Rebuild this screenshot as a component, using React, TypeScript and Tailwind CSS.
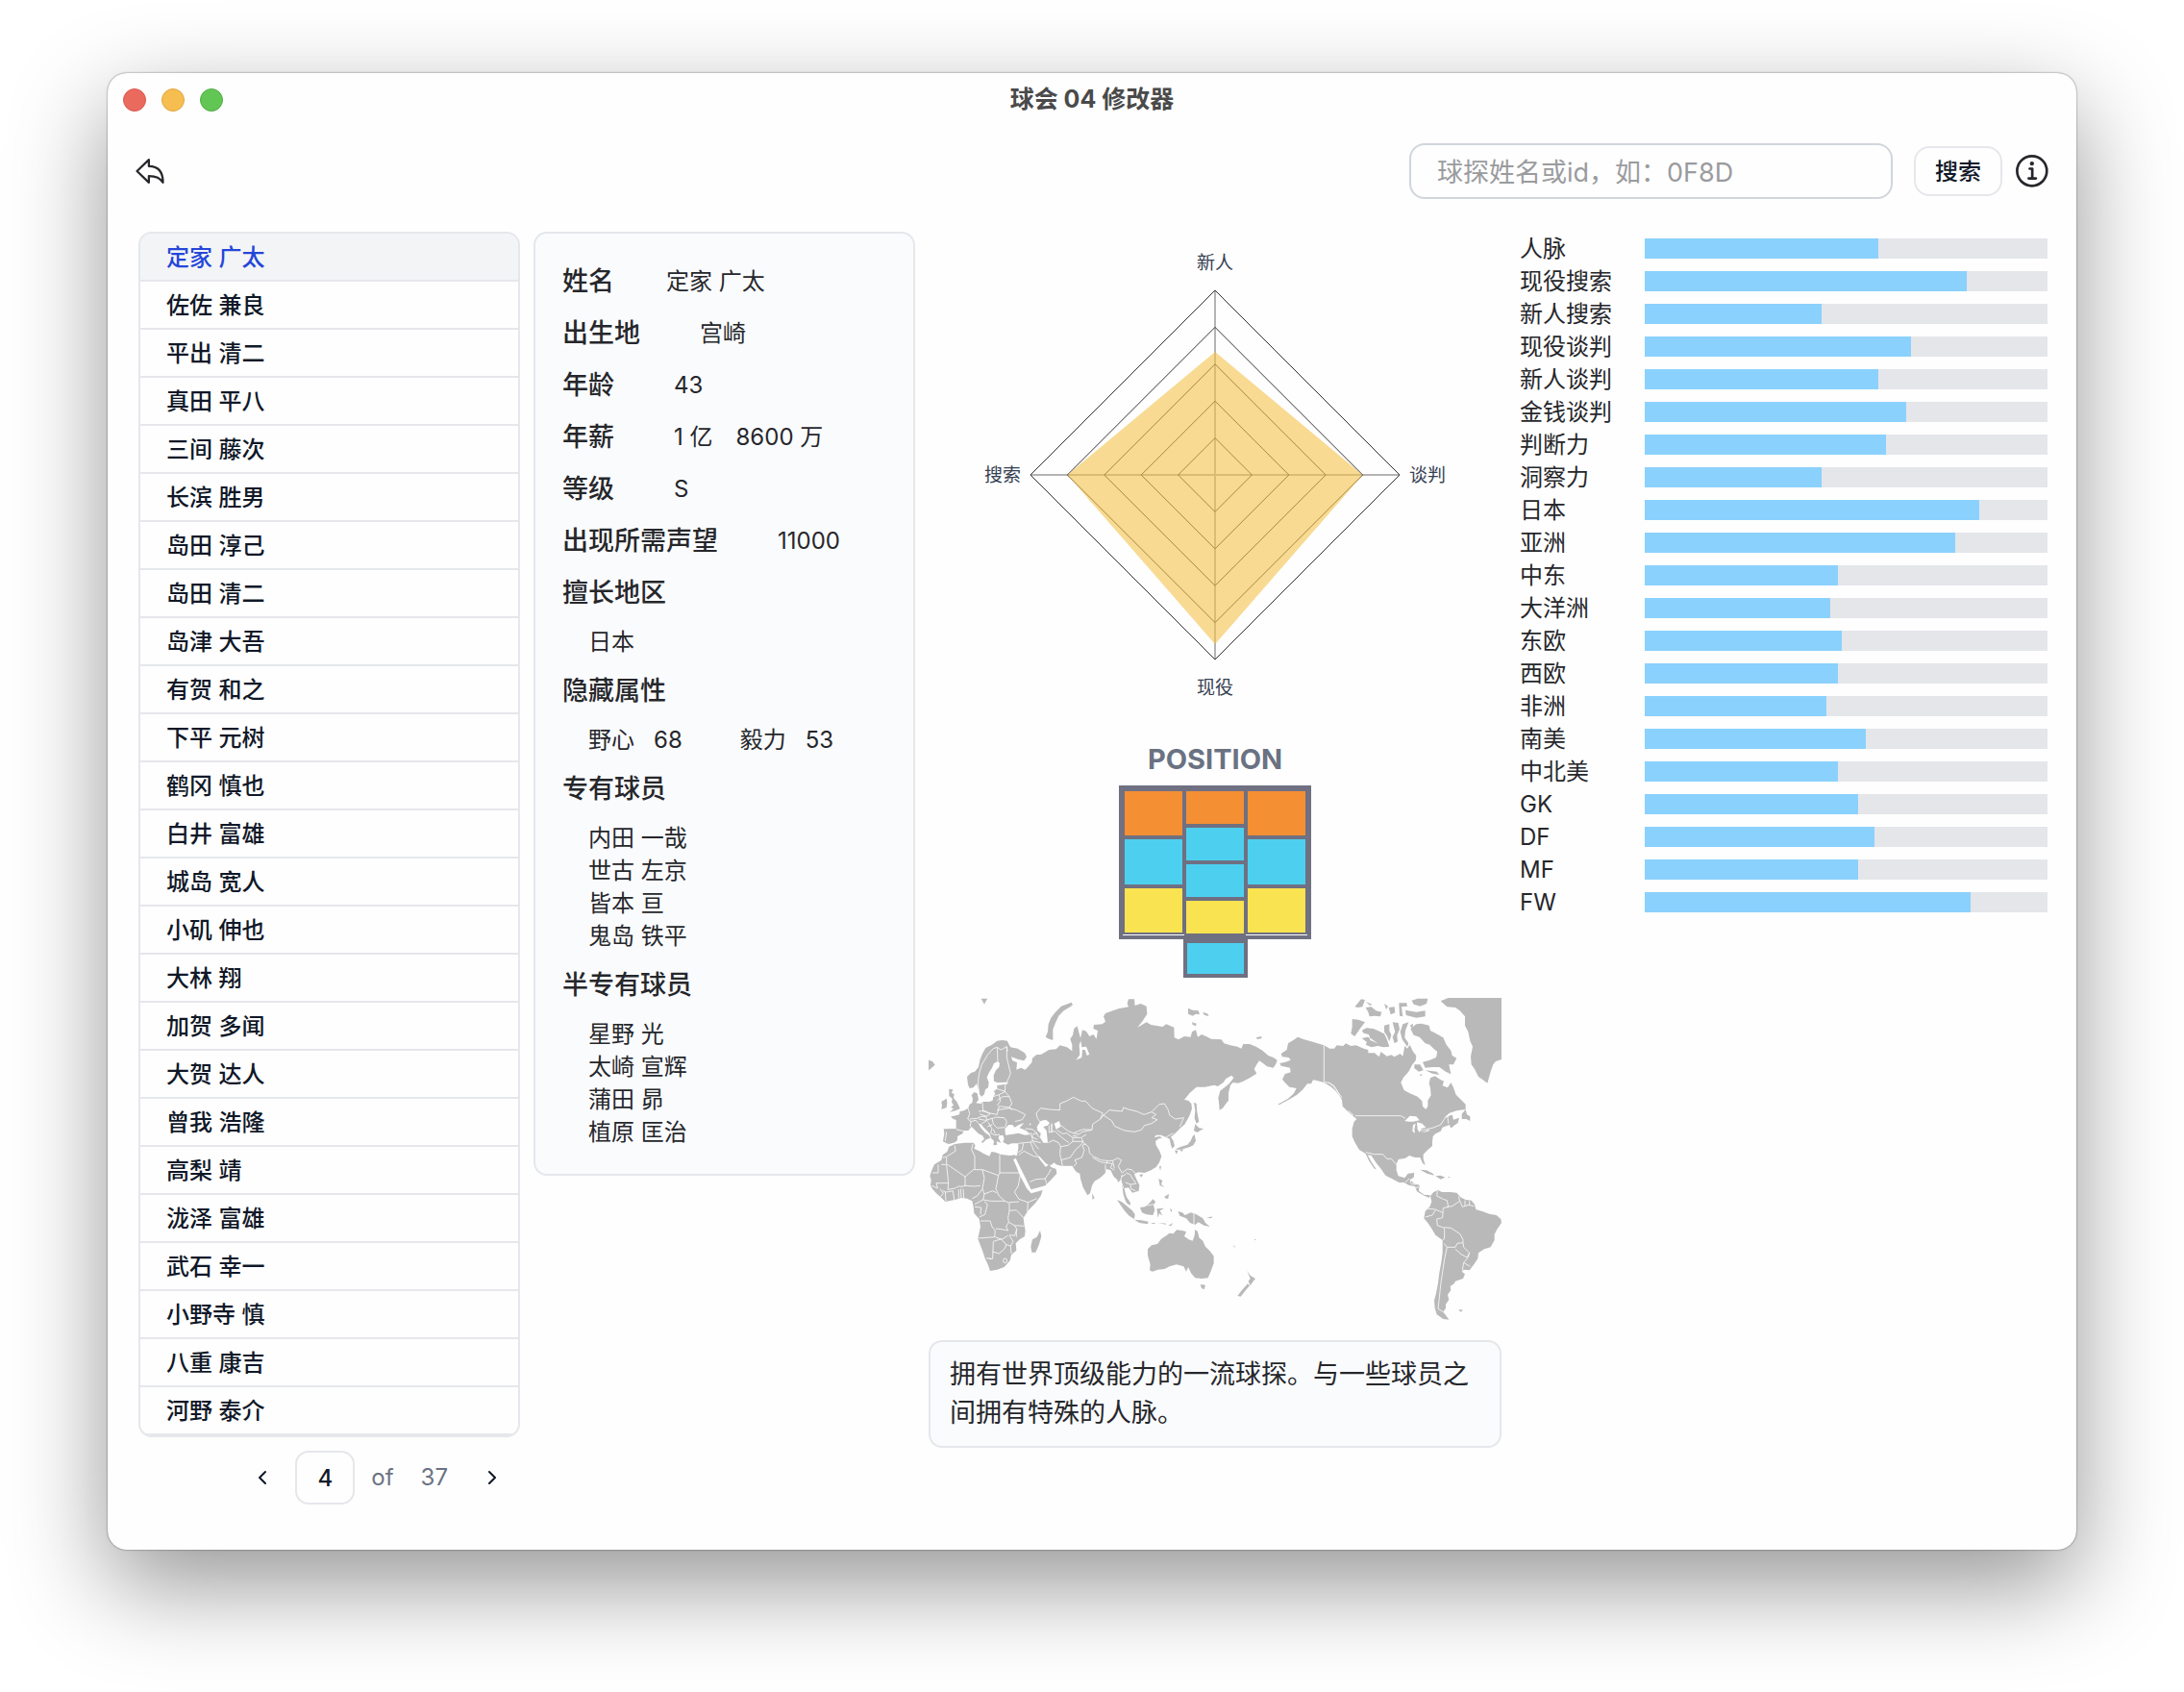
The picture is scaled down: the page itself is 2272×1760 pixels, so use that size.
import { useState } from "react";
import { IoArrowUndoOutline, IoInformationCircleOutline } from "react-icons/io5";
import { ChevronLeft, ChevronRight } from "lucide-react";

const scouts = [
    "定家 广太", "佐佐 兼良", "平出 清二", "真田 平八", "三间 藤次",
    "长滨 胜男", "岛田 淳己", "岛田 清二", "岛津 大吾", "有贺 和之",
    "下平 元树", "鹤冈 慎也", "白井 富雄", "城岛 宽人", "小矶 伸也",
    "大林 翔", "加贺 多闻", "大贺 达人", "曾我 浩隆", "高梨 靖",
    "泷泽 富雄", "武石 幸一", "小野寺 慎", "八重 康吉", "河野 泰介",
];

const abilities = [
    { name: "人脉", value: 58 },
    { name: "现役搜索", value: 80 },
    { name: "新人搜索", value: 44 },
    { name: "现役谈判", value: 66 },
    { name: "新人谈判", value: 58 },
    { name: "金钱谈判", value: 65 },
    { name: "判断力", value: 60 },
    { name: "洞察力", value: 44 },
    { name: "日本", value: 83 },
    { name: "亚洲", value: 77 },
    { name: "中东", value: 48 },
    { name: "大洋洲", value: 46 },
    { name: "东欧", value: 49 },
    { name: "西欧", value: 48 },
    { name: "非洲", value: 45 },
    { name: "南美", value: 55 },
    { name: "中北美", value: 48 },
    { name: "GK", value: 53 },
    { name: "DF", value: 57 },
    { name: "MF", value: 53 },
    { name: "FW", value: 81 },
];

const exclusivePlayers = ["内田 一哉", "世古 左京", "皆本 亘", "鬼岛 铁平"];
const semiExclusivePlayers = ["星野 光", "太崎 宣辉", "蒲田 昴", "植原 匡治"];

function TitleBar() {
    return (
        <div className="grid grid-cols-3 items-center h-14 px-4">
            <div className="flex gap-4">
                <span className="size-6 rounded-full bg-[#eb6a5e] border border-[#d9584d]" />
                <span className="size-6 rounded-full bg-[#f6be50] border border-[#dfa741]" />
                <span className="size-6 rounded-full bg-[#62c655] border border-[#52ae46]" />
            </div>
            <h1 className="text-center font-bold text-[25px] text-[#4a4a4a]">球会 04 修改器</h1>
        </div>
    );
}

function Toolbar() {
    return (
        <div className="flex items-center pl-[26px] pr-6 mt-[17px]">
            <button aria-label="返回">
                <IoArrowUndoOutline size={36} />
            </button>
            <div className="flex items-center ml-auto">
                <input
                    type="text"
                    aria-label="球探姓名或id"
                    placeholder="球探姓名或id，如：0F8D"
                    className="w-[503px] h-[58px] rounded-2xl border-2 border-gray-300 px-[27px] pt-0.5 text-[27px] placeholder:text-[#9a9b9e]"
                />
                <button className="h-[52px] w-[92px] ml-[22px] pt-0.5 rounded-2xl border-2 border-gray-200 text-2xl font-medium text-gray-900">搜索</button>
                <button aria-label="关于" className="ml-[10px]">
                    <IoInformationCircleOutline size={43} />
                </button>
            </div>
        </div>
    );
}

function ScoutList() {
    const [selected, setSelected] = useState(scouts[0]);

    return (
        <div>
            <ul className="rounded-[14px] border-2 border-gray-200 overflow-hidden">
                {scouts.map((name) => (
                    <li key={name} className="border-b-2 border-gray-200">
                        <button
                            className={`block w-full h-12 px-[27px] pt-0.5 text-left text-2xl font-medium ${selected === name ? 'bg-gray-100 text-[#2546d9]' : 'text-gray-900'}`}
                            onClick={() => setSelected(name)}
                        >
                            {name}
                        </button>
                    </li>
                ))}
            </ul>
            <div className="flex items-center justify-end mt-[14px] pr-[17px] text-2xl text-gray-500">
                <button aria-label="上一页" className="text-gray-900">
                    <ChevronLeft size={24} strokeWidth={2} />
                </button>
                <input
                    aria-label="页码"
                    defaultValue="4"
                    className="w-[62px] h-14 ml-[22px] rounded-[14px] border-2 border-gray-200 text-center font-medium text-gray-900"
                />
                <span className="ml-[17px]">of</span>
                <span className="ml-7">37</span>
                <button aria-label="下一页" className="ml-[34px] text-gray-900">
                    <ChevronRight size={24} strokeWidth={2} />
                </button>
            </div>
        </div>
    );
}

function Field({ label, children }: any) {
    return (
        <div className="flex items-center gap-[62px] h-10">
            <span className="text-[27px] font-medium">{label}</span>
            {children}
        </div>
    );
}

function Players({ names }: { names: string[] }) {
    return (
        <ul className="pl-[27px] leading-[34px]">
            {names.map((name) => <li key={name}>{name}</li>)}
        </ul>
    );
}

function ScoutDetail() {
    return (
        <div className="flex flex-col gap-[14px] rounded-[14px] border-2 border-gray-200 bg-[#fafbfd] px-7 pt-[30px] pb-[26px] text-2xl">
            <div className="flex items-center gap-[54px] h-10">
                <span className="text-[27px] font-medium">姓名</span>
                <span>定家 广太</span>
            </div>
            <Field label="出生地"><span>宫崎</span></Field>
            <Field label="年龄"><span>43</span></Field>
            <Field label="年薪">
                <span className="flex gap-6">
                    <span>1 亿</span>
                    <span>8600 万</span>
                </span>
            </Field>
            <Field label="等级"><span>S</span></Field>
            <Field label="出现所需声望"><span>11000</span></Field>
            <Field label="擅长地区" />
            <Players names={["日本"]} />
            <Field label="隐藏属性" />
            <div className="flex gap-[60px] pl-[27px] leading-[34px]">
                <span className="flex gap-5"><span>野心</span><span>68</span></span>
                <span className="flex gap-5"><span>毅力</span><span>53</span></span>
            </div>
            <Field label="专有球员" />
            <Players names={exclusivePlayers} />
            <Field label="半专有球员" />
            <Players names={semiExclusivePlayers} />
        </div>
    );
}

function RadarChart() {
    const r = 192;
    const rings = [0.2, 0.4, 0.6, 0.8, 1];
    // top, right, bottom, left
    const values = [0.667, 0.8, 0.917, 0.8];
    const diamond = (t: number, ri: number, b: number, l: number) =>
        `0,${-t * r} ${ri * r},0 0,${b * r} ${-l * r},0`;

    return (
        <svg viewBox="-298 -253 596 512" className="w-full" role="img" aria-label="能力图">
            <g stroke="#b4b4b4" strokeWidth="2">
                <line x1={-r} y1="0" x2={r} y2="0" />
                <line x1="0" y1={-r} x2="0" y2={r} />
            </g>
            <g fill="none" stroke="#333" strokeWidth="1">
                {rings.map((k) => <polygon key={k} points={diamond(k, k, k, k)} />)}
            </g>
            <polygon points={diamond(values[0], values[1], values[2], values[3])} fill="#f3c149" fillOpacity="0.6" />
            <g className="fill-gray-700 text-[19px]" dominantBaseline="central">
                <text x="0" y="-221" textAnchor="middle">新人</text>
                <text x="0" y="221" textAnchor="middle">现役</text>
                <text x="-202" y="0" textAnchor="end">搜索</text>
                <text x="202" y="0">谈判</text>
            </g>
        </svg>
    );
}

function Position() {
    return (
        <div className="flex flex-col items-center">
            <h2 className="text-[29px] leading-9 font-bold text-gray-500">POSITION</h2>
            <div className="flex w-[200px] h-40 mt-[9px] border-4 border-[#6f7081]">
                <div className="flex-1">
                    <div className="h-[50px] border-2 border-[#6f7081] bg-[#f48f33]" />
                    <div className="h-[51px] border-2 border-[#6f7081] bg-[#4dd0f0]" />
                    <div className="h-[50px] border-2 border-[#6f7081] bg-[#fae351]" />
                </div>
                <div className="flex-1">
                    <div className="h-[38px] border-2 border-[#6f7081] bg-[#f48f33]" />
                    <div className="h-[38px] border-2 border-[#6f7081] bg-[#4dd0f0]" />
                    <div className="h-[38px] border-2 border-[#6f7081] bg-[#4dd0f0]" />
                    <div className="h-[38px] border-2 border-[#6f7081] bg-[#fae351]" />
                </div>
                <div className="flex-1">
                    <div className="h-[50px] border-2 border-[#6f7081] bg-[#f48f33]" />
                    <div className="h-[51px] border-2 border-[#6f7081] bg-[#4dd0f0]" />
                    <div className="h-[50px] border-2 border-[#6f7081] bg-[#fae351]" />
                </div>
            </div>
            <div className="w-[67px] h-10 border-4 border-[#6f7081] bg-[#4dd0f0]" />
        </div>
    );
}

function WorldMap() {
    return (
        <svg viewBox="48 54 1788 1008" className="w-full" role="img" aria-label="世界地图">
            <g fill="#b9b9b9" strokeLinejoin="round">
                {/* Europe and Asia */}
                <path d="M168 300 171 325 176 336 188 334 198 322 203 338 207 355 214 362 222 354 225 340 234 334 236 318 230 302 236 288 246 272 252 258 264 252 270 258 268 270 258 280 251 296 252 314 262 318 292 317 297 322 280 325 262 327 262 338 252 344 256 354 250 362 248 374 238 378 216 378 212 384 196 382 204 372 200 352 190 348 182 358 186 368 184 382 176 386 172 398 158 406 146 408 144 418 128 422 118 424 122 430 134 436 134 462 95 463 97 476 93 502 104 508 112 510 130 505 138 498 138 486 154 478 158 468 172 468 182 456 192 466 204 478 216 484 222 494 212 504 218 506 228 496 240 492 238 484 224 474 210 458 204 446 212 448 220 458 232 470 240 480 243 492 252 500 250 514 262 512 260 502 274 506 266 492 268 484 280 482 284 494 280 504 296 512 308 508 328 508 328 524 324 546 316 546 330 575 345 605 362 640 368 652 390 646 412 640 430 622 448 602 446 588 430 582 424 572 414 582 398 562 388 548 394 548 408 564 416 572 430 576 440 568 446 574 462 578 496 578 504 590 510 598 520 602 522 618 530 645 544 670 552 664 558 640 566 626 584 615 598 602 604 588 616 592 626 612 636 620 640 630 648 620 652 640 656 668 664 690 676 702 678 694 666 676 662 662 658 648 672 646 684 662 704 656 706 638 696 618 690 604 702 598 722 600 742 592 758 582 768 568 775 548 768 530 758 514 756 502 764 494 778 490 768 486 752 490 758 482 774 482 788 488 800 494 804 512 808 524 816 516 812 500 804 488 818 476 832 462 848 448 862 422 870 400 868 384 858 374 846 372 862 352 884 332 910 332 940 326 950 330 968 318 976 306 994 296 1000 304 986 322 958 344 952 366 954 380 956 404 966 398 976 384 984 374 984 350 990 326 998 318 1014 320 1030 314 1050 304 1062 296 1072 290 1064 276 1072 262 1080 250 1092 258 1104 268 1124 272 1132 260 1136 248 1124 240 1108 234 1090 218 1070 206 1050 198 1030 198 1024 212 1012 206 990 202 970 196 962 184 930 182 914 174 900 168 888 176 882 154 870 160 866 176 846 174 828 184 815 178 814 146 790 136 778 144 742 138 728 130 700 146 716 126 730 104 728 80 710 72 692 78 690 58 672 58 668 72 672 82 640 88 600 102 594 112 600 128 590 136 564 138 562 150 576 156 572 182 562 168 550 174 540 158 528 154 522 180 526 208 540 206 550 230 542 234 536 216 528 216 526 240 508 248 520 232 518 200 524 186 516 158 512 142 502 150 498 170 490 182 496 200 496 220 480 208 458 202 446 214 424 216 400 230 384 232 372 242 370 256 350 278 336 272 322 278 324 256 310 250 306 238 328 246 346 250 354 238 348 226 326 212 304 208 298 198 294 188 278 186 262 188 246 200 226 210 216 228 208 248 204 270 192 284 180 288Z" />
                {/* Africa */}
                <path d="M112 518 130 510 160 506 188 506 194 514 190 524 206 532 220 540 238 548 244 534 258 536 272 542 300 546 318 544 320 556 312 558 322 580 332 606 346 632 354 648 368 664 404 654 398 672 380 696 360 716 344 740 346 758 350 780 348 798 332 808 320 820 322 842 306 856 302 874 284 894 262 902 240 906 234 888 224 866 216 842 202 806 206 786 210 768 206 744 190 726 188 706 184 688 168 680 150 678 130 684 100 690 86 676 72 664 60 650 54 640 56 622 52 610 58 592 66 574 88 560 92 544 106 534Z" />
                <path d="M396 780 400 798 392 826 382 848 370 848 367 830 372 808 386 800Z" />
                {/* British Isles, Iceland, Arctic islands */}
                <path d="M112 338 124 340 120 350 128 354 126 366 136 378 142 390 146 400 132 406 114 410 126 400 118 396 126 388 120 380 122 368 112 360ZM104 368 106 380 104 396 88 402 90 390 88 378ZM48 248 60 252 68 263 56 274 48 280ZM494 68 498 76 490 82 470 94 454 110 444 132 436 152 436 172 436 186 424 182 413 176 420 160 422 136 430 116 444 98 462 80ZM212 56 232 56 226 66 222 74ZM858 86 872 92 890 94 894 106 882 104 872 110 858 104ZM904 98 920 104 922 111 908 107ZM870 130 884 134 882 142 872 138ZM1070 178 1086 174 1088 180 1074 183Z" />
                {/* Japan, Sakhalin, Taiwan */}
                <path d="M876 380 884 384 886 410 892 440 884 446 878 430 880 404ZM880 448 892 460 906 462 886 474 876 468ZM878 480 882 500 874 514 862 520 846 524 830 528 818 526 836 518 856 512 866 500 872 486ZM816 530 826 530 822 542ZM832 528 844 526 838 534ZM768 580 774 578 771 594ZM706 606 718 604 712 614Z" />
                {/* South-east Asia */}
                <path d="M558 664 566 678 560 684ZM636 684 650 690 668 704 684 718 692 730 690 744 674 734 658 716ZM690 746 712 748 734 752 732 760 706 756ZM708 708 724 706 738 694 748 682 756 690 750 702 754 716 748 732 728 730 714 724ZM760 712 784 710 770 718 778 734 768 726 764 740ZM766 618 778 624 774 636 784 644 770 640ZM784 674 798 666 796 680 788 680ZM826 720 840 724 848 732 866 724 884 730 904 742 912 756 926 768 908 764 890 754 880 762 864 756 852 742 832 734ZM660 680 672 684 678 700 668 696ZM740 756 756 756 752 760ZM764 756 790 758 788 761ZM796 764 812 756 804 766ZM802 710 808 716 804 724ZM916 740 934 736 930 742Z" />
                {/* Australia and New Zealand */}
                <path d="M732 838 744 826 762 822 774 806 790 796 800 788 812 790 822 778 840 780 852 784 846 798 860 808 872 812 878 796 880 776 888 784 892 802 904 812 912 830 926 844 938 860 938 882 930 904 920 928 900 930 880 928 868 914 858 894 852 908 844 892 822 886 800 892 784 900 764 902 746 908 738 904 740 886 732 858ZM896 948 912 950 908 964 900 960ZM1042 906 1052 920 1068 930 1060 940 1052 952 1046 938 1052 930ZM1044 946 1050 952 1036 968 1022 986 1012 984 1026 966ZM998 824 1006 832 1002 832ZM1064 808 1070 806 1068 811Z" />

                <g transform="translate(930 0)">
                    {/* North America */}
                    <path d="M270 176 290 184 312 190 332 196 352 202 370 212 384 212 392 202 412 204 420 196 436 204 452 202 476 212 490 216 490 226 510 226 524 238 530 222 548 236 562 232 572 238 590 228 598 236 604 204 612 212 620 200 630 222 640 234 638 250 628 262 616 284 600 302 592 318 602 342 620 352 644 362 658 376 660 392 670 402 676 392 676 374 686 358 684 336 680 320 684 304 698 298 714 308 726 314 722 328 738 334 748 318 756 334 764 356 780 372 794 386 794 402 766 406 742 414 728 430 752 418 756 434 774 428 770 444 748 460 744 450 722 458 716 470 700 478 692 486 690 504 690 516 676 528 662 542 662 556 668 576 660 570 652 552 636 552 618 546 606 554 584 558 578 572 578 592 584 610 604 616 614 602 634 600 632 614 620 622 634 634 650 638 648 656 664 668 684 670 680 678 662 670 642 658 636 642 616 638 602 630 586 630 564 618 544 608 532 590 514 568 500 546 488 544 500 566 516 590 508 586 492 562 482 540 462 528 448 504 440 486 440 462 446 440 454 432 430 412 410 392 408 372 390 346 372 330 352 318 330 312 318 310 312 322 300 322 286 340 268 356 248 368 212 388 208 386 240 368 258 352 266 336 244 332 230 318 222 308 230 292 248 286 246 272 218 266 214 258 232 254 248 248 242 240 222 238 218 228 236 216 240 196 256 186Z" />
                    {/* Arctic archipelago */}
                    <path d="M440 120 460 122 480 130 466 148 448 174 436 166 440 144ZM470 156 484 148 506 150 520 156 540 166 548 182 556 206 538 208 520 204 500 208 482 200 486 192 470 180 488 176 496 180 492 168 476 164ZM540 140 556 136 556 156 562 170 556 190 548 172 540 160ZM566 130 584 132 588 152 580 170 582 190 572 196 566 176 574 160ZM598 136 616 130 606 156 604 178 616 196 612 206 596 184 590 160ZM640 136 656 134 680 140 684 156 700 164 724 178 734 200 748 218 752 234 766 242 756 262 742 262 748 292 732 284 712 270 690 270 668 272 660 254 682 248 702 240 706 222 694 212 682 200 668 196 650 176 632 170 622 150ZM620 140 630 134 628 150ZM606 92 640 98 668 94 668 112 640 116 608 108ZM626 62 644 56 676 56 672 72 652 80 632 74ZM448 82 468 58 480 60 472 82 458 84ZM482 84 500 82 514 94 532 98 528 112 510 110 494 112 490 98ZM540 72 552 80 546 90ZM554 84 572 82 574 100 560 106ZM586 70 610 70 612 80 594 82 598 112 588 110ZM482 66 502 74 496 78ZM634 262 652 262 662 280 648 284 634 274ZM650 294 660 292 654 298ZM668 280 704 284 712 294 690 290Z" />
                    <path d="M716 64 740 54 906 54 906 246 888 252 880 262 872 284 862 320 846 308 834 300 822 276 812 262 810 236 816 206 808 188 802 160 792 140 792 112 776 94 762 84 736 82Z" />
                    <path d="M782 416 794 402 798 418 808 424 808 438 796 432 782 432ZM652 590 672 592 692 602 696 608 674 602ZM700 610 716 608 730 614 716 620ZM738 612 746 613 742 616ZM744 452 762 446 750 460Z" />
                    {/* South America */}
                    <path d="M684 672 694 660 708 654 720 660 746 660 766 662 778 676 794 684 812 686 822 698 826 714 846 720 868 728 890 732 904 744 906 756 892 776 884 792 884 810 872 832 852 838 834 850 832 868 820 886 806 904 788 902 782 908 792 916 786 930 762 938 758 946 746 954 748 966 738 980 742 996 732 1010 732 1022 724 1034 738 1052 742 1058 724 1056 704 1042 698 1022 696 998 702 976 708 944 712 912 718 880 722 850 722 810 700 794 688 774 676 756 664 742 668 720 682 706 688 690ZM772 1026 786 1028 778 1034Z" />
                </g>
            </g>

            {/* inland seas and large lakes */}
            <g fill="#fefefe">
                <path d="M286 462 298 450 310 450 316 458 330 450 346 444 332 460 352 468 366 480 350 482 328 476 306 480 288 482ZM386 456 398 438 414 434 426 444 420 452 406 456 416 468 418 486 420 506 406 506 396 490 398 476 388 468ZM440 446 456 438 460 456 446 464ZM430 446 434 446 434 474 430 474ZM362 446 368 446 364 452Z" />
                <g transform="translate(930 0)">
                    <path d="M604 438 620 422 640 424 650 436 630 440 616 440ZM630 450 638 446 634 464 636 476 628 470ZM642 442 658 446 670 458 656 462 650 474 644 464ZM656 474 682 464 678 470ZM684 228 690 226 690 236 684 236Z" />
                    <path d="M494 178 520 196 496 186ZM566 200 574 216 568 222Z" />
                </g>
            </g>

            {/* country borders */}
            <g stroke="#fefefe" fill="none" strokeWidth="2.4" strokeLinejoin="round">
                <path d="M206 352 202 320 206 290 214 262 232 232 250 212 262 208 274 216 292 206 294 222 M262 208 264 252 M292 206 292 240 304 290 292 318 M262 338 288 346 M288 320 286 346 300 362 M250 362 268 356 288 346 M262 374 280 362 300 362 308 384 300 396 268 392 M268 356 272 376 262 390 M216 378 218 408 240 414 262 418 268 392 M262 404 300 398 322 404 350 418 340 434 318 440 M300 396 308 404 M172 400 176 416 170 432 180 440 178 456 M204 408 224 406 240 416 228 424 208 416 M176 432 200 430 212 424 228 424 M204 432 226 436 246 430 256 428 M178 440 196 436 204 446 M226 424 232 436 214 446 M256 426 284 428 292 440 288 456 M246 430 250 448 262 460 286 458 M234 442 246 462 242 476 254 482 270 480 M232 456 246 450 M250 464 256 478 M104 472 100 500 M134 464 158 470" />
                <path d="M350 462 372 464 388 478 M366 474 370 488 388 496 M372 480 384 476 394 490 M328 508 366 504 372 500 372 482 M344 508 340 528 328 536 M366 504 376 530 390 548 M330 544 346 532 376 548 388 550 M372 502 380 512 392 526 M364 628 384 620 412 618 424 600 430 588 M412 618 416 634 M372 500 398 506 M422 506 436 498 454 506 460 518 458 542 462 560 466 578 M460 518 484 514 498 502 530 502 M462 560 490 552 508 526 520 516 530 504 M500 580 510 570 504 560 526 552 534 530 528 514 538 510" />
                <path d="M404 452 388 430 384 414 398 398 424 402 458 404 458 384 478 376 500 364 524 376 538 376 558 398 592 414 584 432 560 448 558 466 530 464 500 476 484 470 458 450 M424 452 424 474 442 470 464 490 486 506 M448 466 466 478 478 476 498 490 498 502 M500 476 516 480 528 472 558 466 M498 490 524 490 540 480 M498 484 512 486 M528 502 548 520 550 538 562 548 M530 502 526 492 M584 432 594 420 612 404 652 408 656 396 672 402 698 408 720 418 744 410 758 418 744 428 762 434 744 446 722 452 712 466 690 472 660 468 628 454 620 438 594 420 M744 410 768 386 784 384 796 404 800 420 818 432 844 428 832 456 M790 488 812 476 M562 548 586 560 604 562 M560 552 584 566 606 570 604 562 622 562 638 554 650 560 M604 568 622 572 616 584 628 592 M600 574 600 592 612 598 M650 560 640 580 652 600 M652 600 668 588 682 590 694 602 M664 600 676 604 686 620 696 634 M650 612 664 604 M662 630 678 636 694 634 M678 636 680 650 694 656 M652 606 648 622 656 648 M622 562 628 586 M730 702 752 698 M876 728 876 762" />
                <path d="M130 514 132 532 104 550 92 552 M104 552 104 572 162 612 188 590 216 590 M88 574 104 574 110 632 72 632 M60 600 78 600 78 574 M186 510 182 528 192 548 192 590 M270 544 270 600 334 600 M216 590 266 608 M270 600 266 608 258 650 268 672 286 688 M216 590 222 616 216 650 222 666 M162 612 162 640 146 644 M162 640 190 642 210 640 M58 640 76 648 72 632 M110 632 108 652 130 648 146 640 M92 656 104 660 124 656 M124 656 128 684 M142 652 142 680 M148 650 150 678 M156 650 158 680 M100 660 102 688 M84 650 94 664 86 674 M216 650 200 672 184 680 M222 666 248 656 260 662 M222 666 218 684 242 688 286 688 M218 684 192 698 M192 706 212 708 210 730 M222 690 232 698 224 730 206 738 M210 750 240 750 246 768 256 780 254 800 204 804 M334 608 328 640 316 660 330 682 358 692 386 680 M300 692 330 690 M358 692 356 722 M286 688 300 694 300 718 296 740 298 754 M300 718 322 716 344 740 M298 754 316 764 346 766 M298 754 290 768 296 780 276 776 258 774 M316 764 324 776 316 796 300 794 M256 800 276 808 296 796 M276 808 290 824 304 828 312 814 300 796 M276 806 250 814 248 868 236 868 M228 866 244 868 M248 846 268 852 286 836 290 824 M304 828 306 852 M322 776 322 800" />
                <ellipse cx="287" cy="874" rx="6" ry="7" />
                <g transform="translate(930 0)">
                    <path d="M352 202 352 316 370 320 390 340 408 366 M450 422 592 422 606 430 M652 468 690 460 716 450 734 422 756 416 M738 424 740 446 M484 536 508 542 536 542 548 556 562 556 578 574 M606 630 618 618 M622 620 622 632 M624 634 640 636 M634 648 648 644 M706 656 704 672 724 682 736 686 740 706 724 710 722 740 M736 706 752 704 776 688 772 674 M776 688 784 706 804 700 820 704 M792 686 792 704 M806 688 806 700 M676 712 700 714 722 724 M668 738 690 732 700 716 M722 740 704 744 706 764 728 772 728 804 724 810 M728 770 748 772 776 790 786 808 786 818 768 820 762 832 736 832 726 820 M786 818 788 832 806 850 798 864 780 854 762 838 M806 850 800 866 788 880 808 892 M788 880 784 904 M736 832 728 870 722 910 716 950 712 990 708 1024 724 1034" />
                    <path d="M366 318 384 328 396 350 406 376 M428 406 444 420" />
                </g>
            </g>
        </svg>
    );
}

function AbilityBars() {
    return (
        <div className="pl-[5px] text-2xl">
            {abilities.map(({ name, value }) => (
                <div key={name} className="flex items-center h-[34px]">
                    <span className="w-[130px] shrink-0 pt-0.5">{name}</span>
                    <div className="grow h-[21px] bg-[#e5e6ea]">
                        <div className="h-full bg-[#8bd1fd]" style={{ width: `${value}%` }} />
                    </div>
                </div>
            ))}
        </div>
    );
}

function App() {
    return (
        <div className="flex min-h-screen bg-white px-28 pt-[76px] pb-[148px] font-['Inter','Noto_Sans_CJK_SC',sans-serif] text-[#26272b]">
            <main className="flex-1 rounded-[20px] bg-[#fefefe] shadow-[0_0_2px_rgba(0,0,0,0.6),0_36px_100px_rgba(0,0,0,0.42)]">
                <TitleBar />
                <Toolbar />
                <div className="grid grid-cols-[397fr_397fr_596fr_554fr] items-start gap-[14px] mt-[34px] pl-8 pr-[30px]">
                    <ScoutList />
                    <ScoutDetail />
                    <div className="flex flex-col">
                        <RadarChart />
                        <div className="mt-[19px]">
                            <Position />
                        </div>
                        <div className="mt-[21px]">
                            <WorldMap />
                        </div>
                        <p className="mt-5 rounded-[14px] border-2 border-gray-200 bg-[#fafbfd] px-5 py-[14px] text-[27px] leading-10">
                            拥有世界顶级能力的一流球探。与一些球员之间拥有特殊的人脉。
                        </p>
                    </div>
                    <AbilityBars />
                </div>
            </main>
        </div>
    );
}

export default App;
